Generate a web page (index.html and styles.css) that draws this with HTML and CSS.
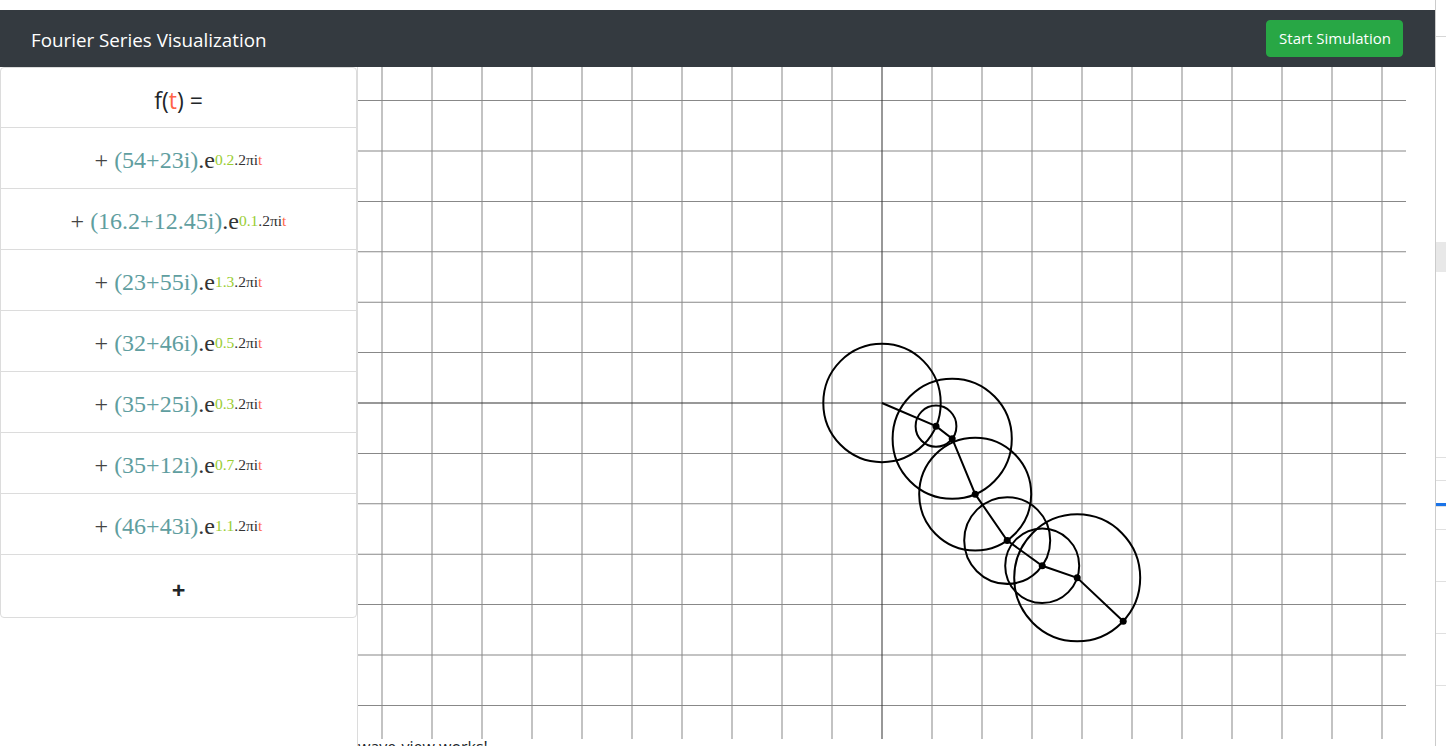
FILE: index.html
```html
<!DOCTYPE html>
<html>
<head>
<meta charset="utf-8">
<title>Fourier Series Visualization</title>
<link rel="stylesheet" href="styles.css">
</head>
<body>
<div class="page">
  <div class="main">
    <div class="topgap"></div>
    <header class="navbar">
      <span class="brand">Fourier Series Visualization</span>
      <button class="btn-start">Start Simulation</button>
    </header>
    <div class="content">
      <aside class="sidebar">
        <ul class="card">
          <li class="item head">f(<span class="tv">t</span>)&nbsp;=</li>
          <li class="item term"><span class="op">+</span>&nbsp;<span class="coef">(54+23i)</span><span class="e">.e</span><sup><span class="fr">0.2</span><span class="e">.2πi</span><span class="tv">t</span></sup></li>
          <li class="item term"><span class="op">+</span>&nbsp;<span class="coef">(16.2+12.45i)</span><span class="e">.e</span><sup><span class="fr">0.1</span><span class="e">.2πi</span><span class="tv">t</span></sup></li>
          <li class="item term"><span class="op">+</span>&nbsp;<span class="coef">(23+55i)</span><span class="e">.e</span><sup><span class="fr">1.3</span><span class="e">.2πi</span><span class="tv">t</span></sup></li>
          <li class="item term"><span class="op">+</span>&nbsp;<span class="coef">(32+46i)</span><span class="e">.e</span><sup><span class="fr">0.5</span><span class="e">.2πi</span><span class="tv">t</span></sup></li>
          <li class="item term"><span class="op">+</span>&nbsp;<span class="coef">(35+25i)</span><span class="e">.e</span><sup><span class="fr">0.3</span><span class="e">.2πi</span><span class="tv">t</span></sup></li>
          <li class="item term"><span class="op">+</span>&nbsp;<span class="coef">(35+12i)</span><span class="e">.e</span><sup><span class="fr">0.7</span><span class="e">.2πi</span><span class="tv">t</span></sup></li>
          <li class="item term"><span class="op">+</span>&nbsp;<span class="coef">(46+43i)</span><span class="e">.e</span><sup><span class="fr">1.1</span><span class="e">.2πi</span><span class="tv">t</span></sup></li>
          <li class="item add">+</li>
        </ul>
      </aside>
      <section class="stage">
        <svg class="plane" width="1048" height="672" viewBox="0 0 1048 666.67" preserveAspectRatio="none">
          <g class="grid" stroke="#888" stroke-width="1">
            <line x1="24" y1="0" x2="24" y2="666.67"/>
            <line x1="74" y1="0" x2="74" y2="666.67"/>
            <line x1="124" y1="0" x2="124" y2="666.67"/>
            <line x1="174" y1="0" x2="174" y2="666.67"/>
            <line x1="224" y1="0" x2="224" y2="666.67"/>
            <line x1="274" y1="0" x2="274" y2="666.67"/>
            <line x1="324" y1="0" x2="324" y2="666.67"/>
            <line x1="374" y1="0" x2="374" y2="666.67"/>
            <line x1="424" y1="0" x2="424" y2="666.67"/>
            <line x1="474" y1="0" x2="474" y2="666.67"/>
            <line x1="574" y1="0" x2="574" y2="666.67"/>
            <line x1="624" y1="0" x2="624" y2="666.67"/>
            <line x1="674" y1="0" x2="674" y2="666.67"/>
            <line x1="724" y1="0" x2="724" y2="666.67"/>
            <line x1="774" y1="0" x2="774" y2="666.67"/>
            <line x1="824" y1="0" x2="824" y2="666.67"/>
            <line x1="874" y1="0" x2="874" y2="666.67"/>
            <line x1="924" y1="0" x2="924" y2="666.67"/>
            <line x1="974" y1="0" x2="974" y2="666.67"/>
            <line x1="1024" y1="0" x2="1024" y2="666.67"/>
            <line x1="0" y1="33.33" x2="1048" y2="33.33"/>
            <line x1="0" y1="83.33" x2="1048" y2="83.33"/>
            <line x1="0" y1="133.33" x2="1048" y2="133.33"/>
            <line x1="0" y1="183.33" x2="1048" y2="183.33"/>
            <line x1="0" y1="233.33" x2="1048" y2="233.33"/>
            <line x1="0" y1="283.33" x2="1048" y2="283.33"/>
            <line x1="0" y1="383.33" x2="1048" y2="383.33"/>
            <line x1="0" y1="433.33" x2="1048" y2="433.33"/>
            <line x1="0" y1="483.33" x2="1048" y2="483.33"/>
            <line x1="0" y1="533.33" x2="1048" y2="533.33"/>
            <line x1="0" y1="583.33" x2="1048" y2="583.33"/>
            <line x1="0" y1="633.33" x2="1048" y2="633.33"/>
          </g>
          <g class="axes" stroke="#333" stroke-width="1">
            <line x1="524" y1="0" x2="524" y2="666.67"/>
            <line x1="0" y1="333.33" x2="1048" y2="333.33"/>
          </g>
          <g class="epicycles" fill="none" stroke="#000" stroke-width="2">
            <circle cx="524" cy="333.33" r="58.7"/>
            <circle cx="578" cy="356.33" r="20.4"/>
            <circle cx="594.2" cy="368.78" r="59.6"/>
            <circle cx="617.2" cy="423.78" r="56"/>
            <circle cx="649.2" cy="469.78" r="43"/>
            <circle cx="684.2" cy="494.78" r="37"/>
            <circle cx="719.2" cy="506.78" r="63"/>
            <polyline points="524,333.33 578,356.33 594.2,368.78 617.2,423.78 649.2,469.78 684.2,494.78 719.2,506.78 765.2,549.78"/>
          </g>
          <g class="joints" fill="#000">
            <circle cx="578" cy="356.33" r="3.5"/>
            <circle cx="594.2" cy="368.78" r="3.5"/>
            <circle cx="617.2" cy="423.78" r="3.5"/>
            <circle cx="649.2" cy="469.78" r="3.5"/>
            <circle cx="684.2" cy="494.78" r="3.5"/>
            <circle cx="719.2" cy="506.78" r="3.5"/>
            <circle cx="765.2" cy="549.78" r="3.5"/>
          </g>
        </svg>
        <p class="status">wave-view works!</p>
      </section>
    </div>
  </div>
  <div class="devtools">
    <div class="dt-top"></div>
    <div class="dt-gap"></div>
    <div class="dt-bar"></div>
    <div class="dt-space"></div>
    <div class="dt-row"></div>
    <div class="dt-row"></div>
    <div class="dt-tab"></div>
    <div class="dt-row"></div>
    <div class="dt-rule"></div>
    <div class="dt-rule"></div>
    <div class="dt-rule"></div>
    <div class="dt-rule last"></div>
  </div>
</div>
</body>
</html>
```

FILE: styles.css
```css
* { box-sizing: border-box; }
html, body { margin: 0; padding: 0; background: #fff; }
body {
  font-family: "Open Sans", "Noto Sans", sans-serif;
  color: #212529;
  overflow: hidden;
  height: 746px;
}
.page { display: flex; width: 1446px; height: 746px; overflow: hidden; }
.main {
  width: 1435px;
  flex: none;
  display: flex;
  flex-direction: column;
  overflow: hidden;
}
.topgap { height: 10px; flex: none; }
.navbar {
  flex: none;
  height: 57px;
  background: #343a40;
  display: flex;
  align-items: center;
  justify-content: space-between;
  padding: 0 32px 0 31px;
}
.brand {
  color: #fff;
  font-size: 18.8px;
  line-height: 1;
  margin-top: 3px;
}
.btn-start {
  background: #28a745;
  color: #fff;
  border: 1px solid #28a745;
  border-radius: 4px;
  height: 37px;
  width: 137px;
  font-family: inherit;
  font-size: 15px;
  padding: 0 0 0 1px;
  margin-top: -1px;
}
.content { display: flex; align-items: flex-start; flex: none; }
.sidebar { width: 357px; flex: none; }
.card {
  list-style: none;
  margin: 0;
  padding: 0;
  border: 1px solid #dcdcdc;
  border-radius: 4px;
}
.item {
  height: 61px;
  border-bottom: 1px solid #dcdcdc;
  display: flex;
  align-items: center;
  justify-content: center;
}
.item.head { height: 60px; font-size: 23px; color: #212529; padding-top: 4px; }
.tv { color: #ff6347; }
.term {
  font-family: "Liberation Serif", "Times New Roman", serif;
  font-size: 24px;
  line-height: 1;
  padding-top: 3px;
}
.op { color: #444; }
.coef { color: #5f9ea0; }
.e { color: #333; }
.fr { color: #9acd32; }
.term sup {
  font-size: 15.5px;
  vertical-align: 9px;
  line-height: 1;
}
.item.add {
  height: 62px;
  border-bottom: 0;
  font-size: 24px;
  font-weight: 700;
  color: #212529;
  padding-top: 6px;
}
.stage {
  flex: none;
  border-left: 1px solid #dcdcdc;
  width: 1078px;
  display: flex;
  flex-direction: column;
}
.plane { display: block; flex: none; }
.status {
  margin: 0;
  font-size: 16px;
  line-height: 17px;
  color: #212529;
  flex: none;
}
.devtools {
  width: 11px;
  flex: none;
  border-left: 1px solid #cbcbcb;
  display: flex;
  flex-direction: column;
  overflow: hidden;
}
.devtools > div { flex: none; }
.dt-top { height: 37px; background: #fff; border-bottom: 1px solid #d6d6d6; }
.dt-gap { height: 205px; }
.dt-bar { height: 30px; background: #e8e8e8; }
.dt-space { height: 185px; }
.dt-row { height: 23px; border-top: 1px solid #e0e0e0; }
.dt-tab { height: 3px; background: #1a73e8; }
.dt-rule { height: 52px; border-top: 1px solid #e0e0e0; }
.dt-rule.last { height: 60px; }
```
